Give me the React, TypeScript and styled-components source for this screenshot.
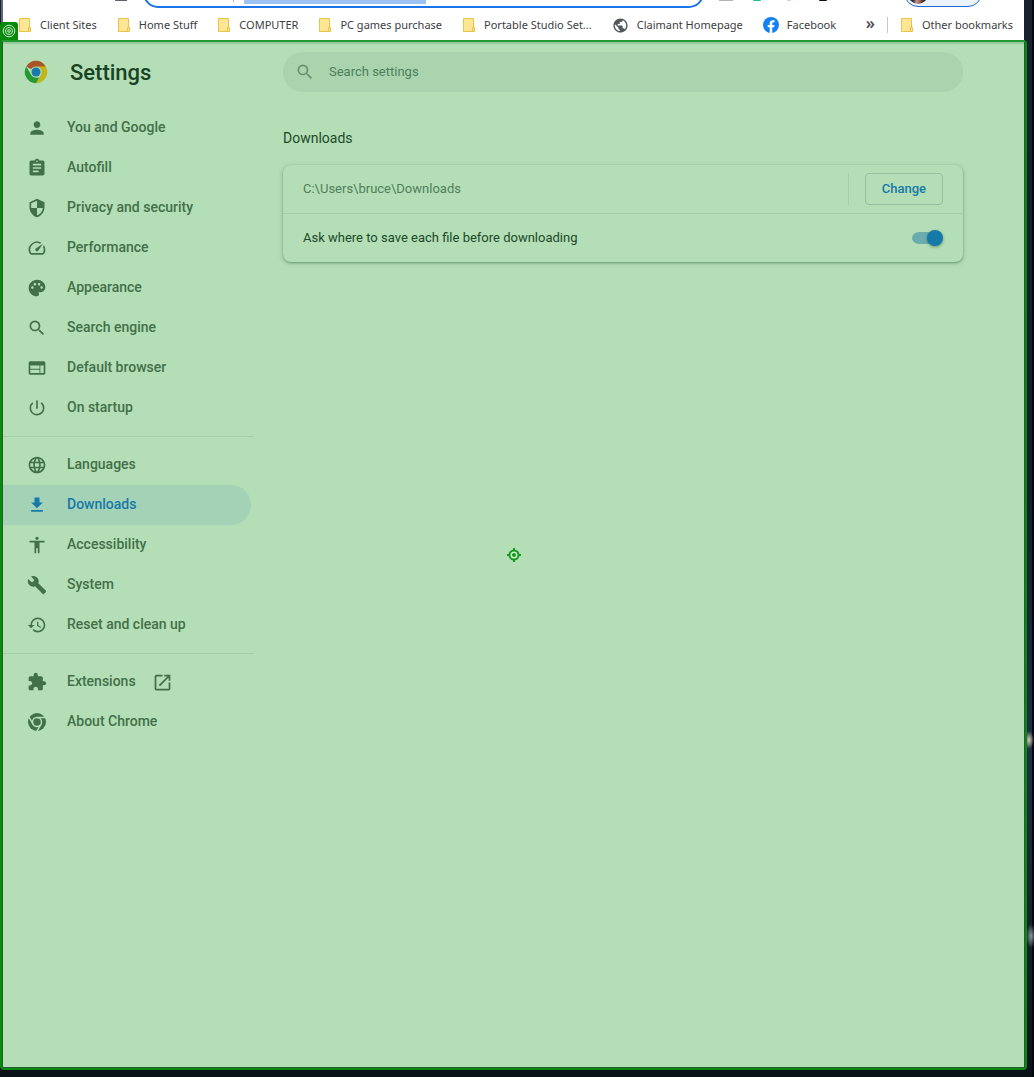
import React, { useState } from 'react';
import styled, { createGlobalStyle } from 'styled-components';
import {
  MdAccessibility,
  MdAssignment,
  MdBuild,
  MdExtension,
  MdHistory,
  MdLanguage,
  MdOpenInNew,
  MdPalette,
  MdPerson,
  MdPowerSettingsNew,
  MdPublic,
  MdSearch,
  MdWeb,
} from 'react-icons/md';

const color = {
  page: '#b4deb5',
  field: '#a9d4ae',
  line: '#a3cfa8',
  selected: '#a4d2b6',
  text: '#1b4a2a',
  muted: '#427049',
  soft: '#4f7f5a',
  blue: '#1779a8',
  frame: '#078a0e',
  edge: '#235c36',
};

const GlobalStyle = createGlobalStyle`
  *, *::before, *::after { box-sizing: border-box; }
  body { margin: 0; background: #0d151e; font-family: Roboto, "Liberation Sans", sans-serif; }
  button, input { font: inherit; }
`;

const Desktop = styled.div`
  display: flex;
  flex-direction: column;
  min-height: 100vh;
  padding: 0 7px 7px 0;
  background:
    radial-gradient(ellipse 5px 9px at calc(100% - 5px) 740px, #d8c5b8, transparent),
    radial-gradient(ellipse 5px 12px at calc(100% - 3px) 936px, #8b95a0, transparent),
    linear-gradient(90deg, transparent calc(100% - 2px), #04070b 0),
    linear-gradient(#17222e, #151f2b 45%, #1d3044 70%, #1c2733 80%, #0b1119);
`;

const BrowserTop = styled.header`
  height: 40px;
  margin: 0 3px 0 1px;
  border-left: 2px solid #5f6878;
  background: #fff;
`;

const Toolbar = styled.div`
  display: flex;
  align-items: flex-end;
  height: 8px;
  padding-right: 42px;
  overflow: hidden;
`;

const Sliver = styled.span<{ $w: number; $h: number; $gap: number; $fill: string; $round?: boolean }>`
  flex: none;
  align-self: flex-start;
  width: ${(p) => p.$w}px;
  height: ${(p) => p.$h}px;
  margin-left: ${(p) => p.$gap}px;
  border-radius: ${(p) => (p.$round ? '0 0 8px 8px' : '0')};
  background: ${(p) => p.$fill};
`;

const Omnibox = styled.div`
  display: flex;
  flex: 1;
  height: 30px;
  margin-left: 16px;
  padding: 0 88px;
  align-items: flex-end;
  border: 2px solid #1a73e8;
  border-radius: 15px;
`;

const Caret = styled.span`
  width: 1px;
  height: 24px;
  margin-bottom: 4px;
  background: #b5b5b5;
`;

const Selection = styled.span`
  width: 182px;
  height: 24px;
  margin: 0 0 2px 10px;
  background: #9dc3f5;
`;

const Profile = styled.div`
  display: flex;
  align-items: flex-end;
  width: 78px;
  height: 28px;
  margin: 0 0 1px 77px;
  padding: 0 3px 2px;
  border: 1px solid #1a66d0;
  border-radius: 14px;
  background: #ebf3fc;
`;

const Avatar = styled.span`
  width: 20px;
  height: 20px;
  border-radius: 50%;
  background: linear-gradient(100deg, #29333a 35%, #d8948a 50%, #3b2520 80%);
`;

const Bookmarks = styled.nav`
  display: flex;
  align-items: center;
  height: 32px;
  padding: 2px 11px 0 15px;
  gap: 20px;
  color: #3c4043;
  font: 11px/16px "Noto Sans", "Open Sans", sans-serif;
`;

const Bookmark = styled.a`
  display: flex;
  align-items: center;
  gap: 8px;
  color: inherit;
  text-decoration: none;
  white-space: nowrap;
`;

const BookmarkEnd = styled.div`
  display: flex;
  align-items: center;
  gap: 12px;
  margin-left: auto;
`;

const MoreButton = styled.button`
  padding: 0 0 4px;
  border: 0;
  background: none;
  color: #4c4f54;
  font-size: 16px;
  font-weight: 600;
  line-height: 16px;
`;

const Rule = styled.span`
  width: 1px;
  height: 16px;
  background: #c4c7cb;
`;

const Frame = styled.main`
  position: relative;
  display: flex;
  flex: 1;
  border: 2px solid ${color.frame};
  border-top-color: #239a31;
  border-radius: 0 4px 4px 4px;
`;

const Page = styled.div`
  display: flex;
  flex: 1;
  min-width: 0;
  border: 1px solid ${color.edge};
  border-top: 0;
  background: linear-gradient(#96c99d 2px, ${color.page} 2px);
`;

const CornerBadge = styled.span`
  position: absolute;
  left: -2px;
  top: -20px;
  display: flex;
  align-items: center;
  justify-content: center;
  width: 18px;
  height: 18px;
  border-radius: 3px 3px 0 0;
  background: ${color.frame};
`;

const Target = styled.svg`
  position: absolute;
  left: 50%;
  top: 50%;
  transform: translate(-50%, -50%);
`;

const Sidebar = styled.aside`
  flex: none;
  width: 250px;
`;

const Brand = styled.div`
  display: flex;
  align-items: center;
  height: 60px;
  padding-left: 21px;
  gap: 22px;
`;

const Title = styled.h1`
  margin: 0;
  padding-top: 2px;
  color: #184425;
  font-size: 22px;
  font-weight: 500;
  line-height: 28px;
`;

const Menu = styled.nav`
  padding-top: 6px;
`;

const MenuItem = styled.a<{ $active?: boolean }>`
  display: flex;
  align-items: center;
  height: 40px;
  margin-right: 2px;
  padding-left: 24px;
  border-radius: 0 20px 20px 0;
  background: ${(p) => (p.$active ? color.selected : 'transparent')};
  color: ${(p) => (p.$active ? color.blue : color.muted)};
  font-size: 14px;
  font-weight: 500;
  line-height: 20px;
  text-decoration: none;

  svg { flex: none; }
`;

const MenuLabel = styled.span`
  padding: 0 16px 2px 20px;
`;

const Divider = styled.hr`
  height: 1px;
  margin: 8px 0;
  border: 0;
  background: ${color.line};
`;

const Content = styled.section`
  flex: 1;
  min-width: 0;
  max-width: 740px;
  padding: 10px 30px 0;
`;

const SearchField = styled.label`
  display: flex;
  align-items: center;
  gap: 14px;
  height: 40px;
  padding: 0 12px;
  border-radius: 20px;
  background: ${color.field};
  color: #669372;
`;

const SearchInput = styled.input`
  flex: 1;
  min-width: 0;
  padding: 0 0 2px;
  border: 0;
  outline: 0;
  background: none;
  color: ${color.text};
  font-size: 13px;

  &::placeholder { color: ${color.soft}; opacity: 1; }
`;

const Heading = styled.h2`
  margin: 36px 0 17px;
  color: ${color.text};
  font-size: 14px;
  font-weight: 400;
  line-height: 20px;
`;

const Card = styled.div`
  border-radius: 8px;
  box-shadow: 0 1px 2px rgba(30, 90, 50, 0.4), 0 1px 4px 1px rgba(30, 90, 50, 0.15);
`;

const Row = styled.div<{ $muted?: boolean }>`
  display: flex;
  align-items: center;
  justify-content: space-between;
  height: 48px;
  padding: 0 20px;
  color: ${(p) => (p.$muted ? color.soft : color.text)};
  font-size: 13px;
  line-height: 20px;

  & + & { height: 49px; border-top: 1px solid ${color.line}; }
`;

const Action = styled.div`
  padding-left: 16px;
  border-left: 1px solid ${color.line};
`;

const ChangeButton = styled.button`
  display: block;
  height: 32px;
  padding: 0 16px;
  border: 1px solid #94c0a0;
  border-radius: 4px;
  background: none;
  color: ${color.blue};
  font-size: 13px;
  font-weight: 500;
`;

const Switch = styled.input`
  display: flex;
  align-items: center;
  appearance: none;
  width: 32px;
  height: 16px;
  margin: 0;
  padding: 2px 1px;
  border-radius: 8px;
  background: #6badaf content-box;

  &::before {
    content: '';
    flex: none;
    width: 16px;
    height: 16px;
    border-radius: 50%;
    background: ${color.blue};
    box-shadow: 0 1px 3px rgba(20, 70, 50, 0.5);
  }

  &:checked::before { margin-left: 15px; }
`;

const FolderIcon = () => (
  <svg width="14" height="16" viewBox="0 0 14 16" aria-hidden="true">
    <path d="M1.5 1.5h10v9h1v4h-11z" fill="#ffe694" stroke="#e8c44d" />
    <path d="M10.5 14.5v-4h2" fill="none" stroke="#e8c44d" />
  </svg>
);

const GlobeIcon = () => <MdPublic size={17} color="#54585d" />;

const FacebookIcon = () => (
  <svg width="16" height="16" viewBox="0 0 24 24" aria-hidden="true">
    <circle cx="12" cy="12" r="12" fill="#1380f3" />
    <path d="M16.700 15.500l.5-3.500h-3.300V9.800c0-1 .5-1.900 2-1.900h1.500v-3s-1.400-.2-2.700-.2c-2.800 0-4.600 1.700-4.600 4.700V12H7v3.500h3.100V24h3.800v-8.500z" fill="#fff" />
  </svg>
);

const ShieldIcon = () => (
  <svg width="20" height="20" viewBox="0 0 24 24" fill="currentColor" aria-hidden="true">
    <path d="M12 1L3 5v6c0 5.550 3.840 10.740 9 12 5.160-1.260 9-6.450 9-12V5l-9-4zm0 10.990h7c-.53 4.120-3.280 7.790-7 8.940V12H5V6.300l7-3.110v8.800z" />
  </svg>
);

const SpeedIcon = () => (
  <svg width="20" height="20" viewBox="0 0 24 24" fill="currentColor" aria-hidden="true">
    <path d="M20.380 8.570l-1.230 1.850a8 8 0 0 1-.22 7.580H5.070A8 8 0 0 1 15.580 6.850l1.850-1.230A10 10 0 0 0 3.350 19a2 2 0 0 0 1.720 1h13.850a2 2 0 0 0 1.740-1 10 10 0 0 0-.27-10.440zM10.590 15.410a2 2 0 0 0 2.830 0l5.660-8.490-8.490 5.660a2 2 0 0 0 0 2.830z" />
  </svg>
);

const DownloadIcon = () => (
  <svg width="20" height="20" viewBox="0 0 24 24" fill="currentColor" aria-hidden="true">
    <path d="M19 9h-4V3H9v6H5l7 7 7-7zM5 18v2h14v-2H5z" />
  </svg>
);

const ChromeMonoIcon = () => (
  <svg width="20" height="20" viewBox="0 0 20 20" aria-hidden="true">
    <circle cx="10" cy="10" r="9" fill="currentColor" />
    <g stroke={color.page} strokeWidth="1.500" fill="none">
      <circle cx="10" cy="10" r="4.500" />
      {[0, 120, 240].map((turn) => (
        <path key={turn} d="M10 5.500H19" transform={`rotate(${turn} 10 10)`} />
      ))}
    </g>
  </svg>
);

const ChromeLogo = () => (
  <svg width="24" height="24" viewBox="0 0 24 24" aria-hidden="true">
    <path d="M12 12L2.300 6.400A11.200 11.200 0 0 1 21.700 6.400z" fill="#a9552a" />
    <path d="M12 6.400h9.700A11.200 11.200 0 0 1 12 23.200l4.850-8.400z" fill="#c2b51a" />
    <path d="M2.300 6.400L7.150 14.800 12 17.600h3.230L12 23.200A11.200 11.200 0 0 1 2.300 6.400z" fill="#259a35" />
    <circle cx="12" cy="12" r="5.600" fill="#b4deb5" />
    <circle cx="12" cy="12" r="4.500" fill="#1779b0" />
  </svg>
);

const bookmarks = [
  { label: 'Client Sites', Icon: FolderIcon },
  { label: 'Home Stuff', Icon: FolderIcon },
  { label: 'COMPUTER', Icon: FolderIcon },
  { label: 'PC games purchase', Icon: FolderIcon },
  { label: 'Portable Studio Set...', Icon: FolderIcon },
  { label: 'Claimant Homepage', Icon: GlobeIcon },
  { label: 'Facebook', Icon: FacebookIcon },
];

const menuGroups = [
  [
    { label: 'You and Google', Icon: MdPerson },
    { label: 'Autofill', Icon: MdAssignment },
    { label: 'Privacy and security', Icon: ShieldIcon },
    { label: 'Performance', Icon: SpeedIcon },
    { label: 'Appearance', Icon: MdPalette },
    { label: 'Search engine', Icon: MdSearch },
    { label: 'Default browser', Icon: MdWeb },
    { label: 'On startup', Icon: MdPowerSettingsNew },
  ],
  [
    { label: 'Languages', Icon: MdLanguage },
    { label: 'Downloads', Icon: DownloadIcon },
    { label: 'Accessibility', Icon: MdAccessibility },
    { label: 'System', Icon: MdBuild },
    { label: 'Reset and clean up', Icon: MdHistory },
  ],
  [
    { label: 'Extensions', Icon: MdExtension, external: true },
    { label: 'About Chrome', Icon: ChromeMonoIcon },
  ],
] as { label: string; Icon: React.ComponentType<{ size?: number }>; external?: boolean }[][];

export default function App() {
  const [ask, setAsk] = useState(true);

  return (
    <Desktop>
      <GlobalStyle />
      <BrowserTop>
        <Toolbar>
          <Sliver $w={12} $h={1} $gap={112} $fill="#5f6368" />
          <Omnibox>
            <Caret />
            <Selection />
          </Omnibox>
          <Sliver $w={14} $h={1} $gap={15} $fill="#b4b4b4" />
          <Sliver $w={8} $h={1} $gap={20} $fill="#1fc08a" $round />
          <Sliver $w={4} $h={1} $gap={26} $fill="#e3cfc6" />
          <Sliver $w={8} $h={1} $gap={28} $fill="#111" $round />
          <Profile>
            <Avatar />
          </Profile>
        </Toolbar>
        <Bookmarks aria-label="Bookmarks">
          {bookmarks.map(({ label, Icon }) => (
            <Bookmark key={label} href="#">
              <Icon />
              {label}
            </Bookmark>
          ))}
          <BookmarkEnd>
            <MoreButton aria-label="More bookmarks">»</MoreButton>
            <Rule />
            <Bookmark href="#">
              <FolderIcon />
              Other bookmarks
            </Bookmark>
          </BookmarkEnd>
        </Bookmarks>
      </BrowserTop>

      <Frame>
        <CornerBadge>
          <svg width="14" height="14" viewBox="0 0 14 14" fill="none" stroke="#c9efc9" aria-hidden="true">
            <circle cx="7" cy="7" r="5.800" />
            <circle cx="7" cy="7" r="3.500" />
            <circle cx="7" cy="7" r="1.300" />
          </svg>
        </CornerBadge>
        <Page>
          <Sidebar>
            <Brand>
              <ChromeLogo />
              <Title>Settings</Title>
            </Brand>
            <Menu aria-label="Settings">
              {menuGroups.map((group, index) => (
                <React.Fragment key={index}>
                  {index > 0 && <Divider />}
                  {group.map(({ label, Icon, external }) => (
                    <MenuItem key={label} href="#" $active={label === 'Downloads'}>
                      <Icon size={20} />
                      <MenuLabel>{label}</MenuLabel>
                      {external && <MdOpenInNew size={21} />}
                    </MenuItem>
                  ))}
                </React.Fragment>
              ))}
            </Menu>
          </Sidebar>
          <Content>
            <SearchField>
              <MdSearch size={20} />
              <SearchInput type="search" placeholder="Search settings" aria-label="Search settings" />
            </SearchField>
            <Heading>Downloads</Heading>
            <Card>
              <Row $muted>
                <span>C:\Users\bruce\Downloads</span>
                <Action>
                  <ChangeButton>Change</ChangeButton>
                </Action>
              </Row>
              <Row>
                <label htmlFor="ask-location">Ask where to save each file before downloading</label>
                <Switch
                  id="ask-location"
                  type="checkbox"
                  role="switch"
                  checked={ask}
                  onChange={(event) => setAsk(event.target.checked)}
                />
              </Row>
            </Card>
          </Content>
        </Page>
        <Target width="14" height="14" viewBox="0 0 14 14" aria-hidden="true">
          <circle cx="7" cy="7" r="4.500" fill="#d3efd3" stroke="#149a1c" strokeWidth="2" />
          <circle cx="7" cy="7" r="2" fill="#149a1c" />
          <path d="M7 0v3M7 11v3M0 7h3M11 7h3" stroke="#149a1c" strokeWidth="2" />
        </Target>
      </Frame>
    </Desktop>
  );
}
